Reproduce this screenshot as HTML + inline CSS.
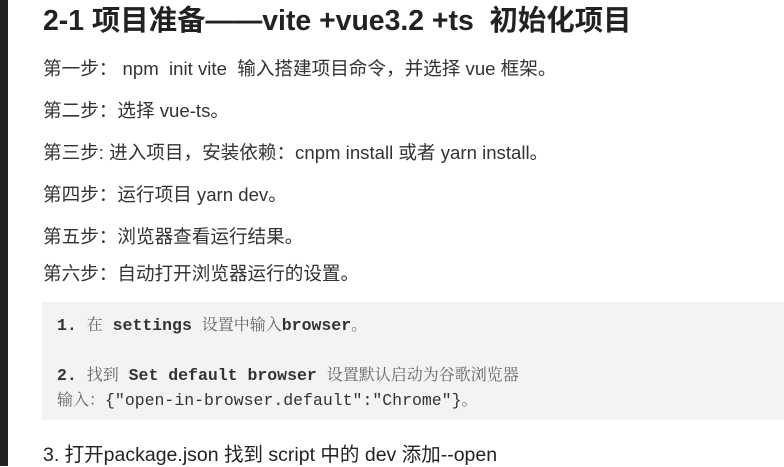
<!DOCTYPE html>
<html><head><meta charset="utf-8"><style>
body{margin:0;width:784px;height:466px;overflow:hidden;background:#fff;position:relative;font-family:"Liberation Sans","Noto Sans CJK SC",sans-serif;color:#333}
.l{position:absolute;left:0;width:8px;top:0;height:466px;background:#222}
.t{position:absolute;left:43px;top:-2px;font-size:28.4px;font-weight:bold;color:#222;white-space:nowrap}
.p{position:absolute;left:43px;font-size:18.6px;white-space:nowrap;color:#333}
.code{position:absolute;left:42px;top:302px;width:742px;height:118px;background:#f3f3f3}
.c{position:absolute;left:57px;font-family:"Liberation Mono","Noto Serif CJK SC",monospace;font-size:16.5px;color:#333;white-space:nowrap}
.c b{font-weight:bold}
.s{font-family:"Noto Serif CJK SC",serif;color:#666;font-size:16px}
</style></head><body>
<div class="l"></div>
<div class="t">2-1 项目准备——vite +vue3.2 +ts&nbsp; 初始化项目</div>
<div class="p" style="top:54px">第一步： npm&nbsp; init vite&nbsp; 输入搭建项目命令，并选择 vue 框架。</div>
<div class="p" style="top:96px">第二步：选择 vue-ts。</div>
<div class="p" style="top:138px">第三步: 进入项目，安装依赖：cnpm install 或者 yarn install。</div>
<div class="p" style="top:180px">第四步：运行项目 yarn dev。</div>
<div class="p" style="top:222px">第五步：浏览器查看运行结果。</div>
<div class="p" style="top:259px">第六步：自动打开浏览器运行的设置。</div>
<div class="code"></div>
<div class="c" style="top:312px"><b>1.</b> <span class="s">在</span> <b>settings</b> <span class="s">设置中输入</span><b>browser</b><span class="s">。</span></div>
<div class="c" style="top:362px"><b>2.</b> <span class="s">找到</span> <b>Set default browser</b> <span class="s">设置默认启动为谷歌浏览器</span></div>
<div class="c" style="top:387px"><span class="s">输入：</span>{"open-in-browser.default":"Chrome"}<span class="s">。</span></div>
<div class="p" style="top:438px;left:43px;font-size:19.5px;color:#222">3. 打开package.json 找到 script 中的 dev 添加--open</div>
</body></html>
